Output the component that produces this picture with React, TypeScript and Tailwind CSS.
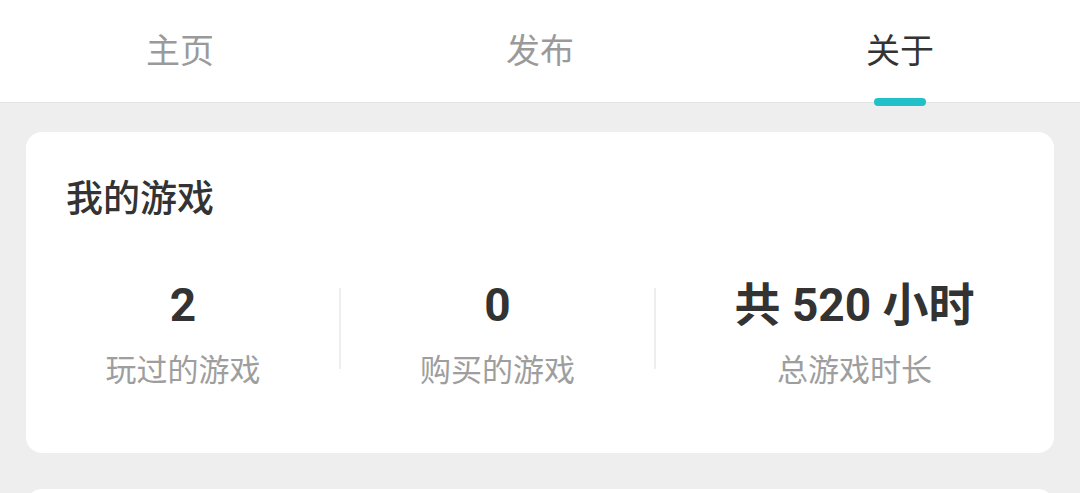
import React from "react";

const font = { fontFamily: '"Roboto", "Noto Sans CJK SC", sans-serif' };

const tabs = ["主页", "发布", "关于"];
const active = 2;

const stats = [
  { value: "2", label: "玩过的游戏" },
  { value: "0", label: "购买的游戏" },
  { value: "共 520 小时", label: "总游戏时长" },
];

const App: React.FC = () => {
  return (
    <div className="w-[1080px] h-[493px] overflow-hidden bg-[#eeeeee]" style={font}>
      {/* Tab bar */}
      <div className="flex h-[103px] bg-white border-b border-[#e2e2e2]">
        {tabs.map((tab, i) => (
          <div key={tab} className="relative flex-1 flex items-center justify-center">
            <span
              className={`text-[34px] leading-[40px] ${
                i === active ? "text-[#333333]" : "text-[#9a9a9a]"
              }`}
            >
              {tab}
            </span>
            {i === active && (
              <div className="absolute left-1/2 -translate-x-1/2 bottom-[-4px] w-[52px] h-[8px] rounded-full bg-[#22c0c8]" />
            )}
          </div>
        ))}
      </div>

      {/* My games card */}
      <div className="mx-[26px] mt-[29px] h-[321px] rounded-[16px] bg-white px-10 pt-[44px]">
        <div className="text-[37px] leading-[48px] font-medium text-[#333333]">我的游戏</div>
        <div className="mt-[55px] flex justify-around items-start">
          {stats.map((s, i) => (
            <React.Fragment key={s.label}>
              {i > 0 && <div className="mt-[9px] w-[2px] h-[81px] bg-[#eeeeee]" />}
              <div className="flex flex-col items-center">
                <div className="text-[46px] leading-[52px] font-bold text-[#333333] whitespace-pre">
                  {s.value}
                </div>
                <div className="mt-[21px] text-[31px] leading-[38px] text-[#9e9e9e]">{s.label}</div>
              </div>
            </React.Fragment>
          ))}
        </div>
      </div>

      {/* Next card */}
      <div className="mx-[26px] mt-[36px] h-[40px] rounded-t-[16px] bg-white" />
    </div>
  );
};

export default App;
